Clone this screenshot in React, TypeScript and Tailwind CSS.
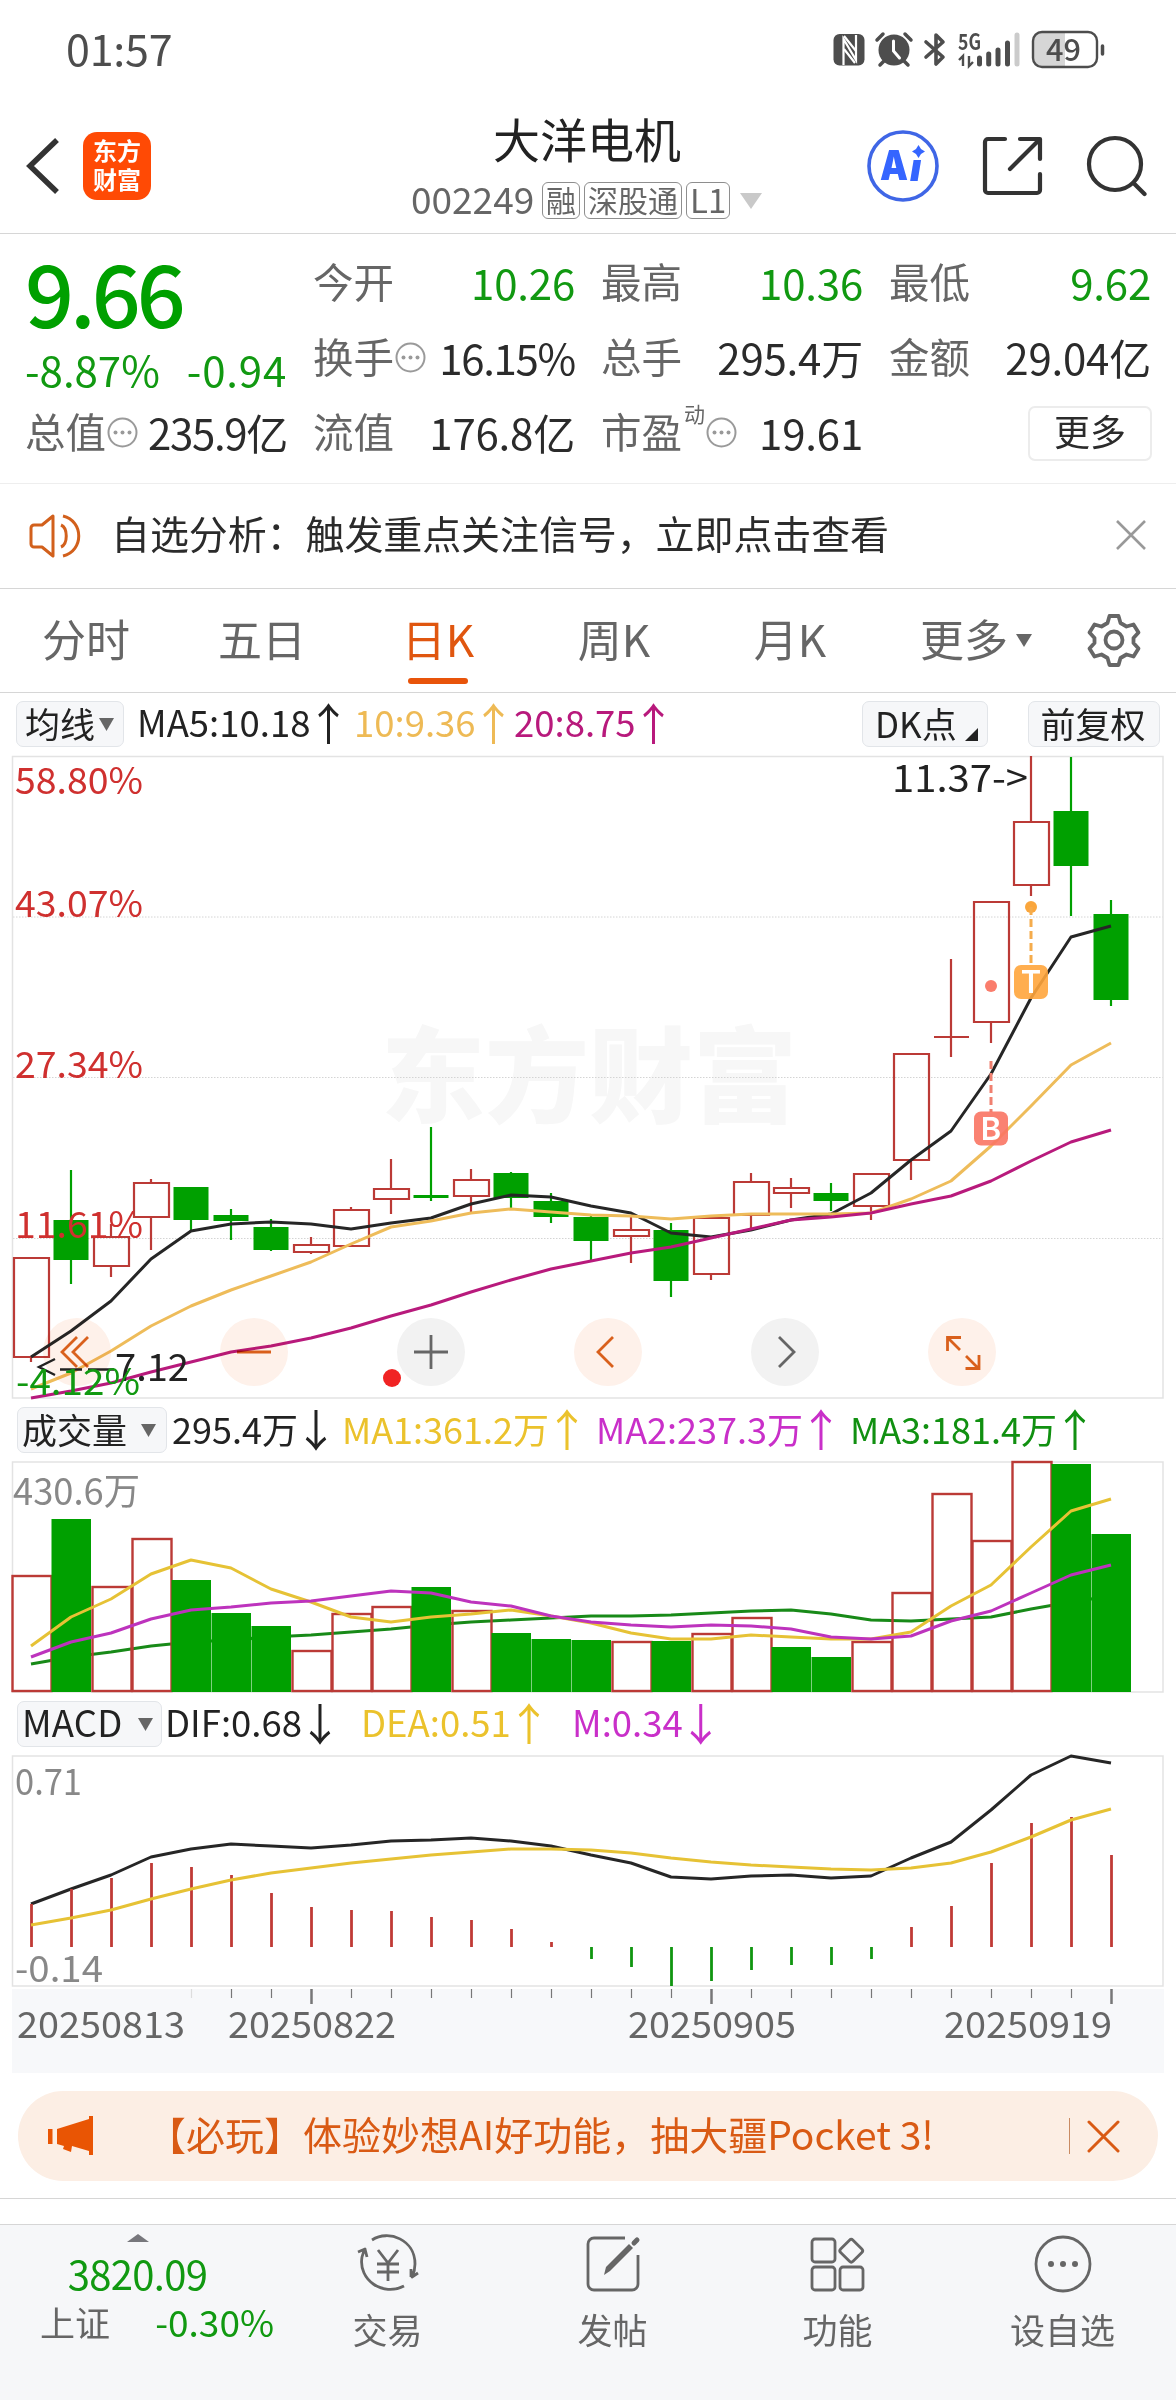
import type { ReactNode } from "react";

type Candle = { up: boolean; high: number; low: number; top: number; bottom: number };

const RED = "#bb3a36";
const GREEN = "#00a000";
const FONT = '"Noto Sans CJK SC", "Noto Sans", sans-serif';

const STEP = 40;
const FIRST_X = 31;

const up = (high: number, top: number, bottom: number, low: number): Candle => ({ up: true, high, top, bottom, low });
const down = (high: number, top: number, bottom: number, low: number): Candle => ({ up: false, high, top, bottom, low });

const candles: Candle[] = [
  up(1258, 1258, 1357, 1362),
  down(1170, 1220, 1260, 1284),
  up(1224, 1237, 1266, 1277),
  up(1179, 1183, 1217, 1250),
  down(1187, 1187, 1220, 1231),
  down(1209, 1215, 1221, 1240),
  down(1219, 1227, 1250, 1251),
  up(1237, 1245, 1252, 1254),
  up(1207, 1210, 1246, 1247),
  up(1159, 1189, 1199, 1214),
  down(1127, 1195, 1198, 1201),
  up(1169, 1180, 1196, 1213),
  down(1172, 1173, 1198, 1210),
  down(1193, 1201, 1217, 1223),
  down(1216, 1217, 1241, 1261),
  up(1216, 1230, 1236, 1263),
  down(1223, 1230, 1281, 1297),
  up(1217, 1218, 1274, 1280),
  up(1173, 1182, 1215, 1230),
  up(1178, 1188, 1193, 1208),
  down(1183, 1193, 1201, 1211),
  up(1173, 1174, 1206, 1220),
  up(1053, 1054, 1160, 1180),
  up(959, 1037, 1037, 1057),
  up(902, 902, 1022, 1043),
  up(756, 822, 885, 896),
  down(757, 811, 866, 916),
  down(900, 914, 1000, 1006),
];

const ma5 = [
  1357, 1331, 1301, 1259, 1231, 1224, 1222, 1224, 1229, 1223, 1218, 1204, 1195, 1197, 1206, 1213, 1233, 1237, 1230,
  1220, 1214, 1193, 1160, 1131, 1074, 998, 937, 926,
];
const ma10 = [
  1389, 1373, 1351, 1326, 1306, 1290, 1276, 1262, 1244, 1227, 1221, 1213, 1209, 1212, 1215, 1216, 1219, 1216, 1214,
  1214, 1214, 1213, 1199, 1181, 1146, 1106, 1065, 1043,
];
const ma20 = [
  1398, 1391, 1383, 1372, 1362, 1352, 1346, 1338, 1328, 1316, 1305, 1292, 1280, 1269, 1261, 1253, 1247, 1238, 1229,
  1220, 1217, 1213, 1204, 1196, 1181, 1161, 1142, 1130,
];

const volumes: [boolean, number][] = [
  [true, 1576], [false, 1519], [true, 1587], [true, 1539], [false, 1580], [false, 1613], [false, 1626],
  [true, 1651], [true, 1614], [true, 1607], [false, 1587], [true, 1611], [false, 1633], [false, 1639],
  [false, 1640], [true, 1642], [false, 1641], [true, 1634], [true, 1618], [false, 1647], [false, 1657],
  [true, 1642], [true, 1593], [true, 1494], [true, 1541], [true, 1462], [false, 1464], [false, 1534],
];
const volMa1 = [
  1646, 1617, 1599, 1574, 1560, 1568, 1589, 1602, 1617, 1622, 1617, 1614, 1610, 1616, 1623, 1633, 1639, 1639, 1635,
  1637, 1639, 1639, 1632, 1606, 1585, 1547, 1511, 1499,
];
const volMa2 = [
  1657, 1642, 1633, 1619, 1610, 1607, 1603, 1601, 1596, 1591, 1593, 1602, 1606, 1616, 1622, 1625, 1627, 1625, 1626,
  1629, 1637, 1639, 1636, 1621, 1611, 1593, 1575, 1565,
];
const volMa3 = [
  1664, 1657, 1652, 1646, 1642, 1640, 1637, 1635, 1632, 1629, 1625, 1622, 1620, 1618, 1616, 1616, 1615, 1613, 1611,
  1610, 1614, 1620, 1621, 1619, 1617, 1609, 1602, 1596,
];

const MACD_ZERO = 1947;
const macd = [
  1904, 1889, 1878, 1863, 1867, 1875, 1893, 1907, 1910, 1911, 1917, 1920, 1929, 1942, 1959, 1967, 1986, 1981, 1970,
  1965, 1965, 1959, 1927, 1906, 1863, 1823, 1817, 1855,
];
const dif = [
  1904, 1889, 1875, 1857, 1849, 1844, 1846, 1848, 1845, 1841, 1840, 1838, 1841, 1846, 1855, 1863, 1877, 1879, 1876,
  1875, 1878, 1876, 1858, 1842, 1810, 1775, 1756, 1763,
];
const dea = [
  1925, 1918, 1910, 1899, 1889, 1880, 1873, 1868, 1863, 1859, 1855, 1852, 1849, 1849, 1850, 1853, 1858, 1862, 1865,
  1867, 1869, 1870, 1868, 1863, 1852, 1837, 1820, 1809,
];

const x = (i: number) => FIRST_X + i * STEP;

function Line({ data, color }: { data: number[]; color: string }) {
  return (
    <polyline
      points={data.map((y, i) => `${x(i)},${y}`).join(" ")}
      fill="none"
      stroke={color}
      strokeWidth="3"
      strokeLinejoin="round"
    />
  );
}

function Label({ at, y, w, fill, size = 37, children }: { at: number; y: number; w: number; fill: string; size?: number; children: string }) {
  return (
    <text x={at} y={y} textLength={w} lengthAdjust="spacingAndGlyphs" fill={fill} fontSize={size} fontFamily={FONT}>
      {children}
    </text>
  );
}

function StatusBar() {
  return (
    <div className="flex h-[100px] items-center justify-between pl-[66px] pr-[71px] text-[#4d4d4d]">
      <span className="pb-[5px] text-[43px] leading-none tracking-[-0.2px]">01:57</span>
      <svg width="272" height="40" viewBox="833 30 272 40" fill="none">
        {/* nfc */}
        <rect x="833.5" y="34" width="31" height="31.5" rx="6" fill="#4d4d4d" />
        <path d="M843.500 65V39l12.500 21V35" stroke="#fff" strokeWidth="2.2" />
        <path d="M844 36l12 15M844 49l11 14" stroke="#fff" strokeWidth="2.2" />
        {/* alarm */}
        <circle cx="894" cy="50" r="15.5" fill="#4d4d4d" />
        <path d="M877 40l6-6M911 40l-6-6M884 61l-4 4M904 61l4 4" stroke="#4d4d4d" strokeWidth="3.5" strokeLinecap="round" />
        <path d="M893.5 41v10l6 7" stroke="#fff" strokeWidth="3" strokeLinecap="round" />
        {/* bluetooth */}
        <path d="M926 42l17 15-7 7V35l7 7-17 15" stroke="#4d4d4d" strokeWidth="3.6" strokeLinejoin="round" strokeLinecap="round" />
        <text x="958" y="49.5" fontSize="22" fontWeight="700" textLength="23" lengthAdjust="spacingAndGlyphs" fill="#4d4d4d" fontFamily={FONT}>
          5G
        </text>
        <path d="M959 60l4-4v10M969 56v10l4-4" stroke="#4d4d4d" strokeWidth="2.4" />
        <path d="M979.5 58v6M988.7 54v10M998 50v14M1007.5 43v21" stroke="#4d4d4d" strokeWidth="5" strokeLinecap="round" />
        <path d="M1017 35v29" stroke="#cbcbcb" strokeWidth="5" strokeLinecap="round" />
        {/* battery */}
        <path d="M1042 33h23v33h-23a8 8 0 0 1-8-8V41a8 8 0 0 1 8-8z" fill="#d6d6d6" />
        <rect x="1033" y="32" width="64" height="35" rx="9" stroke="#4d4d4d" strokeWidth="2.4" />
        <path d="M1102.5 46v8" stroke="#4d4d4d" strokeWidth="3.5" strokeLinecap="round" />
        <text x="1046" y="61" fontSize="31" fontWeight="500" textLength="35" lengthAdjust="spacingAndGlyphs" fill="#4d4d4d" fontFamily={FONT}>
          49
        </text>
      </svg>
    </div>
  );
}

function Tag({ children }: { children: ReactNode }) {
  return (
    <span className="flex h-[37px] shrink-0 items-center justify-center whitespace-nowrap rounded-[6px] border border-[#8e8e8e] px-[3px] pb-[3px] text-[30px] leading-none text-[#666]">
      {children}
    </span>
  );
}

function Header() {
  return (
    <header className="relative flex h-[134px] items-center border-b border-[#d6d6d6] pb-[2px] pl-[26px] pr-[29px]">
      <svg width="34" height="58" viewBox="0 0 34 58" fill="none" stroke="#333" strokeWidth="5.5">
        <path d="M31 3 4 29l27 26" />
      </svg>
      <div className="ml-[23px] flex h-[68px] w-[68px] flex-col items-center justify-center rounded-[14px] bg-[#ff4a05] pb-[3px] text-[24px] font-bold leading-[29px] text-white">
        <span>东方</span>
        <span>财富</span>
      </div>
      <div className="absolute left-[411px] top-[11px] flex w-[360px] flex-col">
        <h1 className="pl-[82px] text-[47px] leading-[54px] text-[#222]">大洋电机</h1>
        <div className="mt-[17px] flex h-[37px] items-center">
          <span className="mr-[7px] w-[124px] pb-[4px] text-[37px] leading-none text-[#666]">002249</span>
          <span className="flex gap-[4px]">
            <Tag>融</Tag>
            <Tag>深股通</Tag>
            <Tag>
              <span className="text-[33px]">L1</span>
            </Tag>
          </span>
          <svg className="ml-[10px] shrink-0" width="22" height="16" viewBox="0 0 22 16">
            <path d="M0 0h22L11 16z" fill="#c9c9c9" />
          </svg>
        </div>
      </div>
      <div className="ml-auto flex items-center">
        <svg width="74" height="74" viewBox="0 0 74 74">
          <circle cx="37" cy="37" r="34" fill="none" stroke="#3f66e6" strokeWidth="3.6" />
          <text x="14" y="51" fontSize="41" fontWeight="900" fill="#3565ff" fontFamily="Inter, sans-serif" textLength="28" lengthAdjust="spacingAndGlyphs">
            A
          </text>
          <text x="44" y="52" fontSize="38" fontWeight="900" fontStyle="italic" fill="#3565ff" fontFamily="Inter, sans-serif">
            ı
          </text>
          <path d="M52.5 16 55 20l4 2.500L55 25l-2.500 4L50 25l-4-2.500L50 20z" fill="#3565ff" />
        </svg>
        <svg className="ml-[41px]" width="62" height="62" viewBox="0 0 62 62" fill="none" stroke="#333" strokeWidth="4.2" strokeLinecap="round" strokeLinejoin="round">
          <path d="M24 4H7a3 3 0 0 0-3 3v48a3 3 0 0 0 3 3h49a3 3 0 0 0 3-3V39" />
          <path d="M39 4h20v20M57 6 29 34" />
        </svg>
        <svg className="ml-[42px]" width="62" height="62" viewBox="0 0 62 62" fill="none" stroke="#333" strokeWidth="4.2" strokeLinecap="round">
          <circle cx="30" cy="29" r="26" />
          <path d="m48.5 48 11 11" />
        </svg>
      </div>
    </header>
  );
}

function InfoDot() {
  return (
    <svg width="31" height="31" viewBox="0 0 31 31" className="-mt-[3px] ml-[1px] shrink-0">
      <circle cx="15.5" cy="15.5" r="14" fill="none" stroke="#9a9a9a" strokeWidth="2" />
      <circle cx="8.500" cy="15.5" r="2" fill="#999" />
      <circle cx="15.5" cy="15.5" r="2" fill="#999" />
      <circle cx="22.500" cy="15.5" r="2" fill="#999" />
    </svg>
  );
}

function Stat({ label, value, info, sup, green }: { label: string; value: string; info?: boolean; sup?: string; green?: boolean }) {
  return (
    <div className="flex h-[75px] items-center whitespace-nowrap leading-none">
      <span className="pb-[4px] text-[40.5px] text-[#666]">{label}</span>
      {sup && <span className="mb-[40px] ml-[2px] text-[21px] text-[#666]">{sup}</span>}
      {info && <InfoDot />}
      <span
        className={`ml-auto pb-[3px] text-[42px] ${info && !sup ? "tracking-[-1.3px]" : "tracking-[-0.2px]"} ${green ? "text-[#119911]" : "text-[#2b2b2b]"}`}
      >
        {value}
      </span>
    </div>
  );
}

function Quote() {
  return (
    <section className="grid h-[250px] grid-cols-4 gap-x-[26px] border-b border-[#eee] px-[25px] pt-[12px]">
      <div>
        <div className="flex h-[98px] items-center pb-[9px] text-[86px] font-medium leading-none tracking-[-4px] text-[#00a000]">9.66</div>
        <div className="flex h-[52px] items-center justify-between pb-[3px] text-[42px] leading-none text-[#119911]">
          <span>-8.87%</span>
          <span className="tracking-[0.8px]">-0.94</span>
        </div>
        <Stat label="总值" value="235.9亿" info />
      </div>
      <div>
        <Stat label="今开" value="10.26" green />
        <Stat label="换手" value="16.15%" info />
        <Stat label="流值" value="176.8亿" />
      </div>
      <div>
        <Stat label="最高" value="10.36" green />
        <Stat label="总手" value="295.4万" />
        <Stat label="市盈" value="19.61" sup="动" info />
      </div>
      <div>
        <Stat label="最低" value="9.62" green />
        <Stat label="金额" value="29.04亿" />
        <div className="flex h-[75px] items-center justify-end">
          <button className="-mr-[1px] h-[55px] w-[124px] rounded-[7px] border-2 border-[#ececec] pb-[8px] text-[36px] leading-none text-[#2b2b2b]">更多</button>
        </div>
      </div>
    </section>
  );
}

function Notice() {
  return (
    <section className="flex h-[105px] items-center border-b border-[#d6d6d6] pl-[28px] pr-[30px]">
      <svg width="54" height="46" viewBox="0 0 54 46" fill="none" stroke="#d2601c" strokeWidth="3">
        <path d="M25 3 14 12H6a3 3 0 0 0-3 3v16a3 3 0 0 0 3 3h8l11 9z" strokeLinejoin="round" />
        <path d="M33 12c7 3 7 19 0 22M35 3c21 5 21 35 0 40" />
      </svg>
      <p className="ml-[29px] pb-[8px] text-[39px] leading-none tracking-[-0.1px] text-[#2b2b2b]">自选分析：触发重点关注信号，立即点击查看</p>
      <svg className="mb-[2px] ml-auto" width="30" height="30" viewBox="0 0 30 30" stroke="#999" strokeWidth="2.6">
        <path d="m1 1 28 28M29 1 1 29" />
      </svg>
    </section>
  );
}

const tabs = ["分时", "五日", "日K", "周K", "月K"];

function Tabs() {
  return (
    <nav className="flex h-[104px] items-stretch border-b border-[#d6d6d6] text-[44px] leading-none text-[#666]">
      {tabs.map((t) => (
        <div key={t} className={`relative flex w-[176px] items-center justify-center pb-[5px] pr-[4px] ${t === "日K" ? "text-[#e0560f]" : ""}`}>
          {t}
          {t === "日K" && <span className="absolute bottom-[8px] left-[56px] h-[6px] w-[60px] rounded-full bg-[#e8540a]" />}
        </div>
      ))}
      <div className="flex w-[192px] items-center pb-[5px] pl-[40px]">
        更多
        <svg className="ml-[8px] mt-[4px]" width="16" height="13" viewBox="0 0 16 13">
          <path d="M0 0h16L8 13z" fill="#666" />
        </svg>
      </div>
      <svg className="ml-[14px] mt-[23px]" width="56" height="56" viewBox="0 0 56 56" fill="none" stroke="#666" strokeWidth="3.8" strokeLinejoin="round">
        <path d="M23.5 4h9l2 7 6 3.5 7-2 5 8-5 5.500v5l5 5.500-5 8-7-2-6 3.500-2 7h-9l-2-7-6-3.500-7 2-5-8 5-5.500v-5l-5-5.500 5-8 7 2 6-3.500z" />
        <circle cx="28" cy="28" r="8.500" />
      </svg>
    </nav>
  );
}

function Arrow({ children }: { children: ReactNode }) {
  return <span className="ml-[3px] inline-flex w-[30px] justify-center text-[44px] leading-none">{children}</span>;
}

function Caret() {
  return (
    <svg className="mt-[4px] shrink-0" width="15" height="13" viewBox="0 0 15 13">
      <path d="M0 0h15L7.500 13z" fill="#666" />
    </svg>
  );
}

function Chip({ className, children }: { className: string; children: ReactNode }) {
  return (
    <button className={`flex h-[46px] shrink-0 items-center rounded-[7px] border border-[#e2e5e9] bg-[#f6f7f9] pb-[4px] text-[35px] leading-none text-[#222] ${className}`}>
      {children}
    </button>
  );
}

function Value({ className, text, arrow }: { className: string; text: string; arrow: string }) {
  return (
    <span className={`flex shrink-0 items-center pb-[4px] ${className}`}>
      {text}
      <Arrow>{arrow}</Arrow>
    </span>
  );
}

function PriceLegend() {
  return (
    <div className="flex h-[62px] items-center whitespace-nowrap pl-[16px] pr-[16px] text-[36.5px] leading-none">
      <Chip className="w-[108px] gap-[4px] pl-[8px]">
        均线
        <Caret />
      </Chip>
      <Value className="ml-[13px] w-[217px] text-[#222]" text="MA5:10.18" arrow="↑" />
      <Value className="w-[160px] text-[#eeba55]" text="10:9.36" arrow="↑" />
      <Value className="text-[#b8197c]" text="20:8.75" arrow="↑" />
      <Chip className="ml-auto w-[126px] gap-[8px] pl-[12px]">
        <span>DK点</span>
        <svg className="mt-[24px]" width="13" height="13" viewBox="0 0 13 13">
          <path d="M13 0v13H0z" fill="#222" />
        </svg>
      </Chip>
      <Chip className="ml-[40px] w-[132px] justify-center pr-[2px]">前复权</Chip>
    </div>
  );
}

function Marker({ cx, y, fill, letter }: { cx: number; y: number; fill: string; letter: string }) {
  return (
    <g>
      <rect x={cx - 17} y={y} width="34" height="34" rx="7" fill={fill} fillOpacity="0.9" />
      <text x={cx} y={y + 28} textAnchor="middle" fontSize="31" fontWeight="600" fill="#fff" fontFamily="Inter, sans-serif">
        {letter}
      </text>
    </g>
  );
}

const controls: { key: string; muted?: boolean; d: string }[] = [
  { key: "rewind", d: "M34 19 19 34l15 15M45 19 30 34l15 15" },
  { key: "zoom-out", d: "M17 34h34" },
  { key: "zoom-in", muted: true, d: "M17 34h34M34 17v34" },
  { key: "prev", d: "M39 19 24 34l15 15" },
  { key: "next", muted: true, d: "M28 19l15 15-15 15" },
  { key: "expand", d: "M19.5 33V19.5H33M20 20l12 12M51 37v13.5H37.5M50 50 38 38" },
];

function PriceChart() {
  return (
    <div className="relative h-[645px]">
      <svg width="1176" height="645" viewBox="0 755 1176 645" className="block">
        <text x="381" y="1115" fontSize="104" fontWeight="900" textLength="416" fill="#f7f7f7" fontFamily={FONT}>
          东方财富
        </text>
        {[917, 1077.5, 1238.5].map((y) => (
          <path key={y} d={`M13 ${y}H1163`} stroke="#d4d4d4" strokeDasharray="1.5 1.5" />
        ))}
        <rect x="12.5" y="756.5" width="1150.5" height="641.5" fill="none" stroke="#e3e3e3" strokeWidth="1.5" />
        {candles.map((c, i) => {
          const color = c.up ? RED : GREEN;
          if (!c.up) {
            return (
              <g key={i}>
                <path d={`M${x(i)} ${c.high}V${c.low}`} stroke={color} strokeWidth="2.2" />
                <rect x={x(i) - 17.5} y={c.top} width="35" height={c.bottom - c.top} fill={color} />
              </g>
            );
          }
          return (
            <g key={i} stroke={color} strokeWidth="2.2" fill="none">
              <path d={`M${x(i)} ${c.high}V${c.top}M${x(i)} ${c.bottom}V${c.low}`} />
              <path d={`M${x(i) - 17} ${c.top}h35V${c.bottom}h-35z`} />
            </g>
          );
        })}
        <Line data={ma5} color="#262626" />
        <Line data={ma10} color="#eebc5a" />
        <Line data={ma20} color="#b81a7c" />

        <circle cx="991" cy="986" r="6" fill="#fa7d6c" />
        <path d="M991 1061V1112" stroke="#f08070" strokeWidth="3" strokeDasharray="8 4" />
        <Marker cx={991} y={1111.5} fill="#f97463" letter="B" />
        <circle cx="1031" cy="907" r="6" fill="#faa63c" />
        <path d="M1031 907V964" stroke="#f5ac4c" strokeWidth="3" strokeDasharray="8 4" />
        <Marker cx={1031} y={965} fill="#ffa53c" letter="T" />

        <Label at={15} y={794} w={128} fill="#cf302f">58.80%</Label>
        <Label at={15} y={917} w={128} fill="#cf302f">43.07%</Label>
        <Label at={15} y={1078} w={128} fill="#cf302f">27.34%</Label>
        <Label at={15} y={1238} w={128} fill="#cf302f">11.61%</Label>
        <text x="892" y="792" fontSize="38" textLength="136" lengthAdjust="spacingAndGlyphs" fill="#222" fontFamily={FONT}>
          {"11.37->"}
        </text>
      </svg>
      <div className="absolute left-[43px] top-[563px] flex gap-[109px] mix-blend-multiply">
        {controls.map((c) => (
          <svg key={c.key} width="68" height="68" viewBox="0 0 68 68" fill="none">
            <circle cx="34" cy="34" r="34" fill={c.muted ? "#f2f2f2" : "#fef1ea"} />
            <path d={c.d} stroke={c.muted ? "#666" : "#d9601c"} strokeWidth="2.8" />
          </svg>
        ))}
      </div>
      <svg width="400" height="60" viewBox="12 1340 400 60" className="absolute left-[12px] top-[585px]">
        <path d="M55 1359 39 1367l16 8M60 1369.500h22M88 1369.500h26" fill="none" stroke="#222" strokeWidth="2.4" />
        <Label at={115} y={1381} w={74} fill="#222" size={38}>7.12</Label>
        <Label at={16} y={1395} w={124} fill="#119911">-4.12%</Label>
        <circle cx="392" cy="1378" r="9" fill="#f02323" />
      </svg>
    </div>
  );
}

function VolumeLegend() {
  return (
    <div className="flex h-[60px] items-center whitespace-nowrap pl-[17px] text-[36px] leading-none">
      <Chip className="w-[150px] gap-[14px] pl-[4px]">
        成交量
        <Caret />
      </Chip>
      <Value className="ml-[5px] w-[170px] text-[#222]" text="295.4万" arrow="↓" />
      <Value className="w-[254px] text-[#ebc22c]" text="MA1:361.2万" arrow="↑" />
      <Value className="w-[254px] text-[#c92fc9]" text="MA2:237.3万" arrow="↑" />
      <Value className="text-[#119011]" text="MA3:181.4万" arrow="↑" />
    </div>
  );
}

function VolumeChart() {
  return (
    <svg width="1176" height="234" viewBox="0 1460 1176 234" className="block">
      <rect x="12.5" y="1462" width="1150.5" height="230" fill="none" stroke="#e3e3e3" strokeWidth="1.5" />
      <Label at={13} y={1504.5} w={127} fill="#888">430.6万</Label>
      <Line data={volMa3} color="#188a18" />
      {volumes.map(([rise, top], i) =>
        rise ? (
          <rect key={i} x={x(i) - 18.5} y={top} width="39" height={1691 - top} fill="none" stroke={RED} strokeWidth="2.4" />
        ) : (
          <rect key={i} x={x(i) - 19.5} y={top} width="39.5" height={1692 - top} fill={GREEN} />
        )
      )}
      <Line data={volMa1} color="#e6c235" />
      <Line data={volMa2} color="#bd33bd" />
    </svg>
  );
}

function MacdLegend() {
  return (
    <div className="flex h-[60px] items-center whitespace-nowrap pl-[17px] text-[36.5px] leading-none">
      <Chip className="w-[145px] gap-[16px] pl-[4px]">
        <span className="w-[100px] text-left text-[36.5px] tracking-[0.2px]">MACD</span>
        <Caret />
      </Chip>
      <Value className="ml-[3px] w-[196px] text-[#222]" text="DIF:0.68" arrow="↓" />
      <Value className="w-[211px] text-[#ebc22c]" text="DEA:0.51" arrow="↑" />
      <Value className="text-[#c92fc9]" text="M:0.34" arrow="↓" />
    </div>
  );
}

function MacdChart() {
  return (
    <svg width="1176" height="320" viewBox="0 1754 1176 320" className="block">
      <rect x="12" y="1989" width="1152" height="84" fill="#f7f8fa" />
      <rect x="12.5" y="1756" width="1150.5" height="230" fill="none" stroke="#e3e3e3" strokeWidth="1.5" />
      <Label at={15} y={1795} w={67} fill="#888">0.71</Label>
      <Label at={15} y={1982} w={88} fill="#888">-0.14</Label>
      <Line data={dif} color="#262626" />
      {macd.map((y, i) => (
        <path key={i} d={`M${x(i) + 0.5} ${MACD_ZERO}V${y}`} stroke={y < MACD_ZERO ? "#c03a36" : "#109610"} strokeWidth="2.8" />
      ))}
      <Line data={dea} color="#e6c235" />
      {macd.map((_, i) => {
        if (i < 4) return null;
        const major = i % 10 === 7;
        return (
          <path key={i} d={`M${x(i) + 0.5} 1989V${major ? 2004 : 1998}`} stroke={i === 4 ? "#ddd" : "#777"} strokeWidth={major ? 2.5 : 1.2} />
        );
      })}
      <Label at={17} y={2037.5} w={168} fill="#666">20250813</Label>
      <Label at={228} y={2037.5} w={168} fill="#666">20250822</Label>
      <Label at={628} y={2037.5} w={168} fill="#666">20250905</Label>
      <Label at={944} y={2037.5} w={168} fill="#666">20250919</Label>
    </svg>
  );
}

function Promo() {
  return (
    <div className="h-[125px] border-b border-[#d6d6d6] pl-[18px] pr-[18px] pt-[17px]">
      <div className="flex h-[90px] items-center rounded-full bg-[#fceee4] pl-[29px] pr-[38px] text-[#d95a14]">
        <svg width="46" height="42" viewBox="0 0 46 42" fill="#e95504">
          <path d="M1 14h4.500v15H1zM10 14 42 4V1h4v39h-4v-4l-17-5-1 6-8-3 1-3-7-2z" />
        </svg>
        <p className="ml-[54px] whitespace-nowrap pb-[6px] text-[39px] leading-none">【必玩】体验妙想AI好功能，抽大疆Pocket 3!</p>
        <span className="ml-auto h-[36px] w-px bg-[#c98a62]" />
        <svg className="ml-[17px]" width="33" height="33" viewBox="0 0 33 33" stroke="#d95a14" strokeWidth="3" strokeLinecap="round">
          <path d="m2 2 29 29M31 2 2 31" />
        </svg>
      </div>
    </div>
  );
}

const navItems: { label: string; icon: ReactNode }[] = [
  {
    label: "交易",
    icon: (
      <>
        <path d="M17 8C34-3 60 8 60 32c0 5-1 9-3 13l6-4M56 45v-8" />
        <path d="M49 54C28 65 3 48 7 25c1-4 2-6 3-8l-7 3M10 17l2 8" />
        <path d="M23 18l10 13 10-13M33 31v18M22 32h22M22 40h22" />
      </>
    ),
  },
  {
    label: "发帖",
    icon: (
      <>
        <path d="M45 6H14a6 6 0 0 0-6 6v40a6 6 0 0 0 6 6h38a6 6 0 0 0 6-6V23" />
        <path d="M24 43l2-8 23-23 4 4-23 23z" fill="#666" stroke="none" />
        <path d="M54 11l3-3" strokeWidth="5" strokeLinecap="round" />
      </>
    ),
  },
  {
    label: "功能",
    icon: (
      <>
        <rect x="7" y="7" width="23" height="23" rx="3" />
        <rect x="7" y="35" width="23" height="23" rx="3" />
        <rect x="35" y="35" width="23" height="23" rx="3" />
        <rect x="37.500" y="10" width="17.5" height="17.5" rx="2.5" transform="rotate(45 46.250 18.750)" />
      </>
    ),
  },
  {
    label: "设自选",
    icon: (
      <>
        <circle cx="33" cy="32" r="27" />
        <circle cx="21" cy="32" r="3" fill="#666" stroke="none" />
        <circle cx="33" cy="32" r="3" fill="#666" stroke="none" />
        <circle cx="45" cy="32" r="3" fill="#666" stroke="none" />
      </>
    ),
  },
];

function BottomNav() {
  return (
    <footer className="mt-[25px] flex h-[176px] border-t border-[#d6d6d6] bg-[#f6f7f9] leading-none">
      <div className="flex w-[275px] flex-col items-center pt-[9px]">
        <svg width="22" height="8" viewBox="0 0 22 8">
          <path d="M11 0 22 8H0z" fill="#77777c" />
        </svg>
        <span className="mt-[11px] text-[40px] tracking-[-0.7px] text-[#119911]">3820.09</span>
        <div className="ml-[39px] mt-[10px] flex w-[234px] items-center justify-between text-[35px]">
          <span className="text-[#666]">上证</span>
          <span className="text-[37px] text-[#119911]">-0.30%</span>
        </div>
      </div>
      {navItems.map((n) => (
        <div key={n.label} className="flex w-[225px] flex-col items-center pt-[7px]">
          <svg width="66" height="64" viewBox="0 0 66 64" fill="none" stroke="#666" strokeWidth="2.8" strokeLinejoin="round">
            {n.icon}
          </svg>
          <span className="mt-[15px] text-[35px] text-[#666]">{n.label}</span>
        </div>
      ))}
    </footer>
  );
}

export default function App() {
  return (
    <div className="h-[2400px] w-[1176px] overflow-hidden bg-white font-['Noto_Sans_CJK_SC','Noto_Sans',sans-serif]">
      <StatusBar />
      <Header />
      <Quote />
      <Notice />
      <Tabs />
      <PriceLegend />
      <PriceChart />
      <VolumeLegend />
      <VolumeChart />
      <MacdLegend />
      <MacdChart />
      <Promo />
      <BottomNav />
    </div>
  );
}
